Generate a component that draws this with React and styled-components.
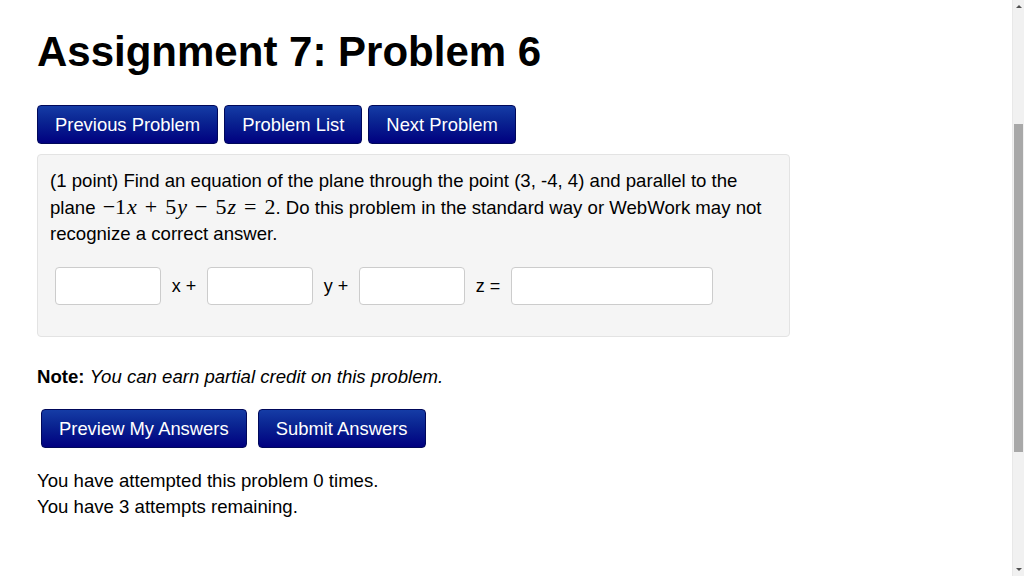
import React from 'react';
import styled, { createGlobalStyle } from 'styled-components';

const GlobalStyle = createGlobalStyle`
  html, body {
    margin: 0;
    padding: 0;
    background: #fff;
    overflow: hidden;
  }
  body {
    font-family: "Liberation Sans", Arial, sans-serif;
    color: #000;
  }
`;

const Page = styled.div`
  padding: 27px 0 0 37px;
  width: 753px;
`;

const Title = styled.h1`
  font-size: 42px;
  font-weight: bold;
  margin: 0 0 28px 0;
  line-height: 50px;
`;

const ButtonRow = styled.div`
  display: flex;
  gap: ${(p) => p.gap || 6}px;
  margin-left: ${(p) => p.indent || 0}px;
  margin-top: ${(p) => p.top || 0}px;
`;

const NavButton = styled.button`
  font-family: "Liberation Sans", Arial, sans-serif;
  font-size: 18.4px;
  color: #fff;
  height: 39px;
  padding: 0 ${(p) => p.pad || 17}px;
  border: 1px solid #00085a;
  border-radius: 4px;
  background: linear-gradient(to bottom, #153ca6 0%, #0a2592 40%, #000080 100%);
  cursor: pointer;
`;

const ProblemBox = styled.div`
  margin-top: 10px;
  background: #f5f5f5;
  border: 1px solid #e3e3e3;
  border-radius: 4px;
  padding: 13px 12px 31px 12px;
  font-size: 18.6px;
  line-height: 26px;
`;

const Statement = styled.p`
  margin: 0;
`;

const MathExpr = styled.span`
  font-family: "Liberation Serif", "Times New Roman", serif;
  font-size: 22px;
  white-space: nowrap;
  margin-left: 2px;
`;

const MathOp = styled.span`
  margin: 0 ${(p) => p.space || 8}px;
`;

const Var = styled.i`
  font-family: "Liberation Serif", "Times New Roman", serif;
  margin-left: 1px;
`;

const AnswerRow = styled.div`
  display: flex;
  align-items: center;
  margin-top: 20px;
  padding-left: 5px;
`;

const AnswerInput = styled.input`
  box-sizing: border-box;
  width: ${(p) => p.w || 106}px;
  height: 38px;
  border: 1px solid #ccc;
  border-radius: 4px;
  background: #fff;
  font-size: 17px;
  padding: 4px 8px;
`;

const Op = styled.span`
  display: inline-block;
  width: ${(p) => p.w || 46}px;
  text-align: center;
  font-size: 18px;
`;

const Note = styled.p`
  margin: 30px 0 0 0;
  font-size: 18.6px;
  line-height: 20px;
  em {
    font-style: italic;
  }
`;

const Attempts = styled.div`
  margin-top: 20px;
  font-size: 18.6px;
  line-height: 26px;
`;

const ScrollTrack = styled.div`
  position: fixed;
  top: 0;
  right: 0;
  width: 11px;
  height: 576px;
  background: #f1f1f1;
  border-left: 1px solid #e8e8e8;
`;

const ScrollThumb = styled.div`
  position: absolute;
  left: 1px;
  top: 124px;
  width: 9px;
  height: 328px;
  background: #a8a8a8;
`;

const Arrow = styled.div`
  position: absolute;
  left: 3px;
  width: 0;
  height: 0;
  border-left: 3px solid transparent;
  border-right: 3px solid transparent;
  ${(p) => (p.down ? 'bottom: 5px; border-top: 3px solid #505050;' : 'top: 5px; border-bottom: 3px solid #505050;')}
`;

export default function App() {
  return (
    <>
      <GlobalStyle />
      <Page>
        <Title>Assignment 7: Problem 6</Title>
        <ButtonRow>
          <NavButton>Previous Problem</NavButton>
          <NavButton>Problem List</NavButton>
          <NavButton>Next Problem</NavButton>
        </ButtonRow>
        <ProblemBox>
          <Statement>
            (1 point) Find an equation of the plane through the point (3, -4, 4) and parallel to the plane{' '}
            <MathExpr>
              −1<Var>x</Var>
              <MathOp>+</MathOp>5<Var>y</Var>
              <MathOp>−</MathOp>5<Var>z</Var>
              <MathOp>=</MathOp>2
            </MathExpr>
            . Do this problem in the standard way or WebWork may not recognize a correct answer.
          </Statement>
          <AnswerRow>
            <AnswerInput w={106} />
            <Op>x +</Op>
            <AnswerInput w={106} />
            <Op>y +</Op>
            <AnswerInput w={106} />
            <Op>z =</Op>
            <AnswerInput w={202} />
          </AnswerRow>
        </ProblemBox>
        <Note>
          <b>Note:</b> <em>You can earn partial credit on this problem.</em>
        </Note>
        <ButtonRow gap={11} indent={4} top={22}>
          <NavButton>Preview My Answers</NavButton>
          <NavButton>Submit Answers</NavButton>
        </ButtonRow>
        <Attempts>
          You have attempted this problem 0 times.
          <br />
          You have 3 attempts remaining.
        </Attempts>
      </Page>
      <ScrollTrack>
        <Arrow />
        <ScrollThumb />
        <Arrow down />
      </ScrollTrack>
    </>
  );
}
